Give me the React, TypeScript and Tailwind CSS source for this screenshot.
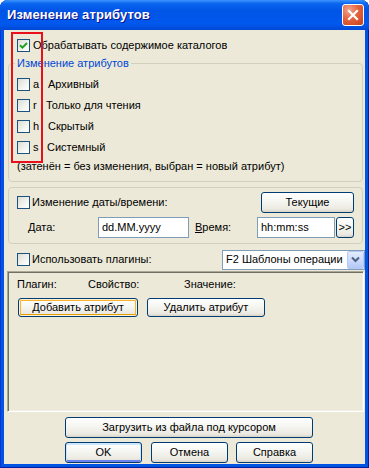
import React from 'react';

const font = "font-['Liberation_Sans',Arial,sans-serif]";

const Check: React.FC<{ checked?: boolean }> = ({ checked }) => (
  <span className="w-[13px] h-[13px] shrink-0 border border-[#1C5180] bg-[linear-gradient(135deg,#DCDCD7_0%,#F4F4F0_60%,#FFFFFF_100%)] flex items-center justify-center">
    {checked && (
      <svg width="9" height="9" viewBox="0 0 9 9">
        <path d="M1 4.2 L3.4 6.6 L8 2" fill="none" stroke="#21A121" strokeWidth="2" />
      </svg>
    )}
  </span>
);

const btn =
  'border border-[#003C74] rounded-[3px] bg-[linear-gradient(180deg,#FFFFFF_0%,#F5F5F1_45%,#EBE9E1_85%,#D8D3C8_100%)] text-black flex items-center justify-center text-[11px] leading-none';

const AttrRow: React.FC<{ letter: string; label: string; gap: string }> = ({ letter, label, gap }) => (
  <div className="h-[21px] flex items-center pl-[8px]">
    <Check />
    <span className="ml-[3px] w-[9px]">{letter}</span>
    <span className={gap}>{label}</span>
  </div>
);

export default function App() {
  return (
    <div className={`${font} relative w-[369px] h-[468px] bg-white text-[11px] text-black`}>
      <div className="w-full h-full flex flex-col rounded-t-[8px] overflow-hidden bg-[#0054E3] shadow-[inset_1px_0_0_#0831D9,inset_-1px_0_0_#001EA0,inset_0_-1px_0_#001EA0]">
        {/* Title bar */}
        <div className="h-[30px] shrink-0 flex items-center justify-between pl-[7px] pr-[5px] bg-[linear-gradient(180deg,#3D95FF_0%,#0A66F0_12%,#0055E5_35%,#0058EE_80%,#0049D6_100%)]">
          <span className="text-white font-bold text-[13px] [text-shadow:1px_1px_#0F1089] tracking-[0.1px]">
            Изменение атрибутов
          </span>
          <span className="w-[22px] h-[22px] rounded-[3px] border border-white bg-[radial-gradient(circle_at_30%_25%,#F0A68E_0%,#E3643E_45%,#C5401C_100%)] flex items-center justify-center">
            <svg width="12" height="12" viewBox="0 0 12 12">
              <path d="M2 2 L10 10 M10 2 L2 10" stroke="white" strokeWidth="2.2" strokeLinecap="square" />
            </svg>
          </span>
        </div>

        {/* Client area */}
        <div className="flex-1 mx-[4px] mb-[4px] bg-[#ECE9D8] flex flex-col">
          <div className="mt-[7px] h-[16px] flex items-center pl-[13px]">
            <Check checked />
            <span className="ml-[3px]">Обрабатывать содержимое каталогов</span>
          </div>

          <fieldset className="mt-[4px] ml-[4px] mr-[2px] border border-[#D0D0BF] rounded-[4px] pt-[4px] pb-[7px]">
            <legend className="ml-[6px] px-[2px] leading-[13px] text-[#0046D5]">Изменение атрибутов</legend>
            <AttrRow letter="a" label="Архивный" gap="ml-[6px]" />
            <AttrRow letter="r" label="Только для чтения" gap="ml-[4px]" />
            <AttrRow letter="h" label="Скрытый" gap="ml-[6px]" />
            <AttrRow letter="s" label="Системный" gap="ml-[5px]" />
            <div className="h-[16px] flex items-center pl-[8px]">
              (затенён = без изменения, выбран = новый атрибут)
            </div>
          </fieldset>

          <fieldset className="mt-[5px] ml-[4px] mr-[2px] border border-[#D0D0BF] rounded-[4px] pt-[4px] pb-[5px]">
            <div className="h-[21px] flex items-center pl-[8px] pr-[8px]">
              <Check />
              <span className="ml-[2px]">Изменение даты/времени:</span>
              <button className={`${btn} ml-auto w-[93px] h-[21px]`}>Текущие</button>
            </div>
            <div className="mt-[4px] h-[21px] flex items-center pl-[19px]">
              <span className="w-[70px]">
                <span className="underline">Д</span>ата:
              </span>
              <span className="w-[91px] h-[21px] border border-[#7F9DB9] bg-white flex items-center pl-[3px]">dd.MM.yyyy</span>
              <span className="ml-[6px] w-[62px]">
                <span className="underline">В</span>ремя:
              </span>
              <span className="w-[78px] h-[21px] border border-[#7F9DB9] bg-white flex items-center pl-[3px]">hh:mm:ss</span>
              <button className={`${btn} ml-[1px] w-[18px] h-[21px] text-[10px]`}>&gt;&gt;</button>
            </div>
          </fieldset>

          <div className="mt-[5px] h-[21px] flex items-center pl-[13px]">
            <Check />
            <span className="ml-[2px]">Использовать плагины:</span>
            <div className="ml-auto w-[143px] h-[20px] border border-[#7F9DB9] bg-white flex items-center">
              <span className="flex-1 pl-[3px]">F2 Шаблоны операции</span>
              <span className="w-[17px] h-[18px] mr-[0px] rounded-[2px] border border-[#B5C8F6] bg-[linear-gradient(180deg,#E3EBFD_0%,#C8D7FA_60%,#B4C8F6_100%)] flex items-center justify-center">
                <svg width="9" height="7" viewBox="0 0 9 7">
                  <path d="M1 1.5 L4.5 5 L8 1.5" fill="none" stroke="#4D6185" strokeWidth="2" />
                </svg>
              </span>
            </div>
          </div>

          <div className="mt-[1px] ml-[3px] mr-[1px] flex-1 border border-t-[#ACA899] border-l-[#ACA899] border-r-white border-b-white shadow-[inset_1px_1px_0_#716F64,inset_-1px_-1px_0_#F1EFE2] pt-[5px] pl-[9px]">
            <div className="h-[14px] flex items-center">
              <span className="w-[71px]">Плагин:</span>
              <span className="w-[96px]">Свойство:</span>
              <span>Значение:</span>
            </div>
            <div className="mt-[7px] flex">
              <button className={`${btn} ml-[1px] w-[120px] h-[19px] shadow-[inset_0_0_0_1px_#FFF0CF,inset_0_-2px_0_0_#E5A000,inset_0_0_0_2px_#F8B330]`}>
                Добавить атрибут
              </button>
              <button className={`${btn} ml-[9px] w-[118px] h-[19px]`}>Удалить атрибут</button>
            </div>
          </div>

          <div className="mt-[5px] pl-[61px]">
            <button className={`${btn} w-[248px] h-[21px]`}>Загрузить из файла под курсором</button>
          </div>
          <div className="mt-[4px] mb-[1px] pl-[61px] flex">
            <button className={`${btn} w-[77px] h-[21px] shadow-[inset_0_1px_0_1px_#CEE7FF,inset_0_-1px_0_1px_#6982EE]`}>OK</button>
            <button className={`${btn} ml-[9px] w-[77px] h-[21px]`}>Отмена</button>
            <button className={`${btn} ml-[8px] w-[77px] h-[21px]`}>Справка</button>
          </div>
        </div>
      </div>

      {/* red annotation */}
      <div className="absolute left-[11px] top-[32px] w-[32px] h-[131px] border-2 border-[#E8101A]" />
    </div>
  );
}
